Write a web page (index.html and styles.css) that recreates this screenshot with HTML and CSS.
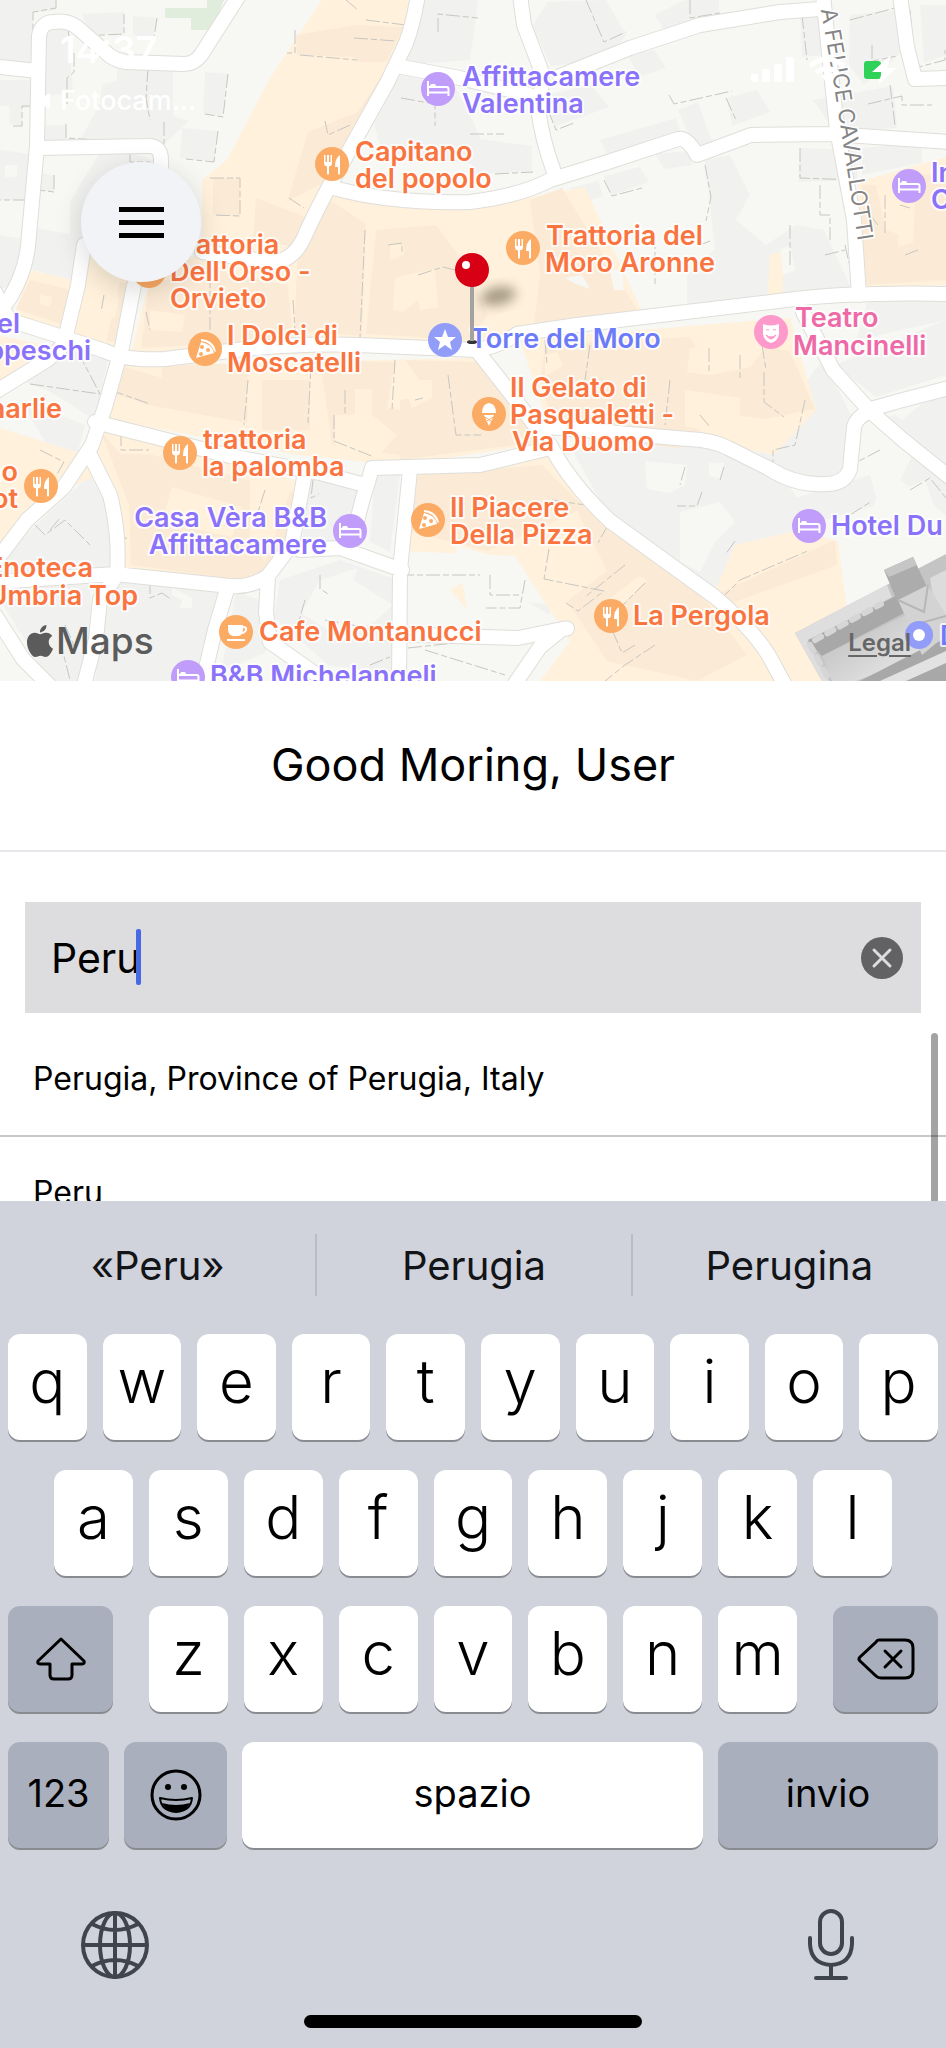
FILE: index.html
```html
<!DOCTYPE html>
<html lang="it">
<head>
<meta charset="utf-8">
<meta name="viewport" content="width=device-width, initial-scale=1">
<title>Home</title>
<link rel="stylesheet" href="styles.css">
</head>
<body>
<main class="screen">
  <section class="map" aria-label="Map">
    <svg class="map-canvas" viewBox="0 0 946 681" preserveAspectRatio="xMidYMid slice">
      <defs>
        <filter id="soft" x="-50%" y="-50%" width="200%" height="200%"><feGaussianBlur stdDeviation="6"/></filter>
        <linearGradient id="roof" x1="0" y1="0" x2="1" y2="1"><stop offset="0" stop-color="#b9b9b9"/><stop offset="1" stop-color="#ececec"/></linearGradient>
        <g id="food">
          <circle r="17" fill="#fcab64"/>
          <path d="M-8-9v8q0 3 3 3.500v7.500q1 1 2 0v-7.500q3-.5 3-3.500v-8h-1.500v7h-1.500v-7h-2v7h-1.500v-7zM8-9q-5 3-5 12h3v7q1 1 2 0z" fill="#fff"/>
        </g>
        <g id="bed">
          <circle r="17" fill="#c19dfb"/>
          <path d="M-10-8v15M-10 3.500H10.500M10.500 7V0q0-2-2-2H-9" fill="none" stroke="#fff" stroke-width="2"/>
          <rect x="-8" y="-5" width="6" height="4" rx="2" fill="#fff"/>
        </g>
        <g id="pizza">
          <circle r="17" fill="#fcab64"/>
          <path d="M-9 9L-4-7Q7-5 9 4zM-4-10Q9-9 11 3L9 2Q6-7-4-8z" fill="#fff"/>
          <g fill="#fcab64"><circle cx="-3" cy="-2" r="2"/><circle cx="3" cy="1" r="2"/><circle cx="-4" cy="5" r="2"/></g>
        </g>
        <g id="masks">
          <circle r="17" fill="#fd9acb"/>
          <path d="M-8-8Q0-5 8-8V2Q7 9 0 11Q-7 9-8 2z" fill="#fff"/>
          <path d="M-5-2q1.500-1 3 0M2-2q1.500-1 3 0M-5 3q5 4 10 0q-5 8-10 0" stroke="#fd9acb" fill="#fd9acb"/>
        </g>
        <g id="roads">
          <path d="M0 67l37 4M0 312l11-16q14-24 17-50l9-100 2-110q2-14 15-14 14-2 24 6l32 28q8 5 16 6l58 2q10 0 17-9L240-6"/>
          <path d="M37 148l110-2q14-1 14 14v90M84 245l-6 40-12 50M134 285l-12 62-17 60-13 38-28 42-37 33L-5 562M-5 292l14 28 44 14 52 17q20 10 60 8l80-10q60-6 113-4l119 5q20-3 40-16l60-9 210-25q60-8 165-6M-5 392l52-32 20-18"/>
          <path d="M418-5q-5 30-12 48l-18 38-58 104q-14 26-24 48-11 28-34 29l-70-10M330 187q60 17 140 15 50-6 80-22l58-18 70-23q9-2 19 16l54-20 80-1 120 8M520-5l4 30 17 45q2 20-3 38 4 32 16 64M397 66l63 12 70 17M560 76l70-28 70-23 80-13 40-3M823-5l14 135 17 90 5 75M900-5l7 52 8 32 35-1"/>
          <path d="M803 312l30 58 38 42 32 28 50 40M871 409l28-8 50-13M868 412q-12 6-14 15l-4 42q-5 15-24 15-30 2-58-16l-40-20q-15-8-40-9l-140-12M478 352l30 38 42 55q20 38 60 76l105 76q45 38 60 70l10 18M550 448l-70 17-108 3q-4 15-9 30l-13 50M410 470l-10 100-1 115M95 422l135 34 90 17 45 12M90 455l20 40q10 40 7 80l-17 24-4 40-12 46M-5 582l120-8 115 12q20 2 38-10l24-32 12-66M268 576l-2 36 4 30 60 42M300 550l40-2 62 22M228 586l-13 44-13 55M-5 615l28 44 26 26M388 634l130 4 44-9q10-1 0 0l-22 18-26 38"/>
        </g>
      </defs>

      <rect width="946" height="681" fill="#f7f7f3"/>
      <path d="M165 8h42V0h17l-12 30h-21V18h-26z" fill="#e1eddc"/>

      <g class="block">
        <path d="M0 0h56v10l-23 3v52L0 60zM43 30l25-2 5 65-31 3zM82 14l42-2v21l-34 2zM133 16l24 2-4 20-20-3zM117 66l56 3v47l16 5-25 23H78l22-40 2-20 15-3zM205 72l23 2-6 42-19-2zM182 128l36 3-4 30-34-3zM0 80h32v28H22v18L10 124l-1-18H0zM40 125h26v16l-26 1zM0 150l30 4-2 46H0zM38 173l16 2v17l-16-2zM100 152h30l28 10v80H70v-40z"/>
        <path d="M0 235l24 4-3 30-11 16-10 5zM36 228l44 8-8 45-42-12z"/>
        <path d="M418 0h60l-8 60-68 5zM400 75l55 12 12 20 25 60-110-15-8-28zM472 138l60 8v26l-60 2z"/>
        <path d="M548 2l58-2 20 35-20 25-55 6-19-40zM655 15l30-15h34v18l-55 12zM628 55l26-5 12 18-27 9zM546 95l45-10 18 22-55 20zM600 140l76-22 5 16-72 24zM678 110l20-8 15 42-17 6zM727 98l30-8 13 22-38 14zM604 176l36-9 9 15-38 14zM570 188l28-7 5 15-25 8zM655 154l35-3 2 14-28 4zM800 12l30 2 5 40-33 3zM850 15l46-5 8 40-40 35-15-20zM813 100l80-14 4 42-62 4zM920 5h26v50l-22 8z"/>
        <path d="M705 160l25-5 20 40-14 25 30 25 30-20 28 5 28 60-165 20v-35l28-26zM800 148l55 2 3 30-60 2zM862 148l60-5v20l-60 12z"/>
        <path d="M35 345l75 5-15 70-48-30-28-10zM20 400l65 25-8 30-30-10zM90 475l20 35 5 55-17 26-98-5v-28zM0 600l90-12 4 93H50zM110 580l110 12-15 89H95zM236 592l30 10v50l-45 20zM280 580l60-20 58 20v95l-70-10-54-48zM308 478l50 10-12 55-45 10zM375 472l25 2-10 78-20-10z"/>
        <path d="M572 450l95-6 58 4 50 25 18 18 20 40-20 20-12 40-28 20-80-50-70-55zM755 448l38-50 30-38 28 55-8 60-35 10-30-10zM835 365l111-45v55l-70 22zM880 420l66-25v70zM880 430l40 10-20 40 46 35v-30zM790 500l80-25 8 30-90 25zM870 295l76-5v30l-90 20zM480 595l70 10v25h-70z"/>
      </g>

      <g class="town">
        <path d="M322 0h90l-12 62-66 122-30 50-10 20-92-5V180l25-20 42-80z"/>
        <path d="M330 195l150 12 105-20 57 125-122 18-43 20-347 8 20-80 65-32 55 10z"/>
        <path d="M112 366l365-8 70 85-150 22-100-10-200-38zM100 430l202 52-12 60-38 40-130-14-4-60-25-60zM520 340l270-22 26 92-42 45-120-24-105-5zM412 475l138-20 55 65 110 80 70 81H540l30-40-55-85-110-5zM80 252l58 28-14 68-60-12zM30 270l42 10-10 62-50-20zM0 336l50 10-50 35zM0 428l80 25-80 100zM95 455l-20 30 20-8zM858 182l88-25v128l-84 3zM735 545l65-15 38 12 12 90 10 49h-72l-72-92z"/>
      </g>
      <g class="town-dark">
        <path d="M296 35l60-10 48 2-18 35-28 0-5-5-56-2zM308 132l50-20 18-28 14-20-65 118-38 20zM213 178h27v39l-27-2zM256 198l52 20-10 30-45-10zM330 200l36 24-4 112-68-6 4-80zM376 230l60-5 30 40 22 50-20 25-102-6zM530 200l32-12 77 125-105 12 6-50zM213 270l75 15 5 55-152 8 8-64zM120 282l18 4-10 58-22-3z"/>
        <path d="M162 366l85-3 1 60-100-18-42-14 12-26 44 13zM262 380h48v50h-48zM320 360l75 2-8 45 45 10-20 40-80-12zM405 360l70 2 65 80-140 18v-60l30-5zM101 432l20 22h28l150 40-12 55-36 32-120-16-2-60zM545 345l145-8 20 38 40-8 16-20 24 4 25 58-50 10-45-6-40 35-120-12-20-50zM412 475l130-10 60 60 100 70 45 60-50 26-90-20-40-60 40-30-30-60-90 40-80-20zM862 185l14 0 10 45 15 5 5-60 40 0v105l-82 5zM715 595l120-55 2 25-110 40zM30 280l42 10-8 35-48-16z"/>
      </g>
      <g class="town-light">
        <path d="M395 278l10-3 30-6 3 38-18 3-2-10-15 12-10-2zM390 245h14v10l-14 5zM150 310l35 5-3 17-32-2zM104 295l15 3-4 20-13-3zM250 382l12-2v40l-15 5zM335 415h20v-26h17v26l25 20-20 22-42-12zM402 380h30v18l-20 10zM122 432l26 8-2 15-25-4zM172 487l70 20-10 30-70-15zM250 480l40 12-25 70-15-22zM690 348h22l-3 27-22-3zM685 390l55 8v40l-55-12zM770 255l14-5-2 60-15-4zM900 200l15 2-2 40-15 5zM450 590l30-18 30 30-15 40zM617 610l30-30-8-4-36 28zM470 215l45-3 20 90-15 25-30-2zM545 355l12-3 6 14-18 10zM40 295l12 2-2 10-10-3z"/>
      </g>
      <g fill="#f7f7f3">
        <path d="M455 545l35 10 35 45 40 25-30 35-60-10zM645 461l42 4-2 20-15 8-23-4zM709 463h15l-4 15-11-2zM680 512l40-10 15 20-20 20-15 30-20-10zM780 250l10-5 5 25-12 5zM565 278l17-3 8 14-14-5zM610 270l12 0 2 20-10 0zM172 595l10 5-2 8 12 0v-10l-20-10zM320 580l38-12-5 12 40 25-20 18-40 10-32-20zM875 500l50-20 21 60-40 20-38-10zM680 205l10 0-8 18zM5 165h12v12H5zM875 400l20-5 25 10-18 15z"/>
      </g>
      <path class="outline" d="M56 0v8l-23 4v55M82 36l42-2V14M68 28l2 18 4 6v20l-7 6v26M148 68l-2 30 4 22M157 18l-3 20M66 124v14l78 5M164 122v22M228 74l-5 43-18-3M218 131l-4 31-28-3M33 106H22v20H10M54 175v17l-16-2M130 152v10h20M27 200H0M210 178l30 0v38l-27-1M300 55l57 5M366 20l40 5M354 38l42 3M346 0l12 10M295 30v23l-8 0M438 32v-18l40 4M401 98l34 6v22M350 125l-22 10-3-14M289 198l15 10M470 134h34M495 174l38-2M586 0l18 42 22-10M690 0v18l30-5M660 32l40-12M669 95l5 9 58-13M726 98l10 22M600 160l78-25M548 110l8 20 18-7M604 180l8 16 30-8M705 165l6 32-5 24M820 185v30h10v25M790 225v40M845 245l4 18M800 148v30l55 2M802 15l5 45M850 20l45-12M872 45v16l25-5M910 10l5 58 30-8V50M890 85l5 40M868 104l34-8v9h30M885 195v38M905 255l13-5M365 230l-5 108M418 275l25-8 20 5M388 245l14-2v12M104 295l-3 17M146 312l4 18M210 265v65M293 300l3 45M110 390l40 14M248 380l-4 45M311 365l-3 58M395 360l-3 50M345 390v25M415 400l8-2M448 375l8 60h25M334 415v26l40 16M121 432v18h28M78 352l22 42-70-10M45 395l-5 22M40 450l24 12-8 14M50 530l10-12M35 525l10 10 20-15 25 25M100 480l15 60 12-2M65 625l8 18v10M150 580v18l12-5 10 7M265 490l-8 25M313 480l-2 18 8-4M320 575v14l10 6M305 600l-8 28M325 620l65 12M400 575l80 0M490 575v20l30 0M525 580l-5 28h-34M549 549l-5 30 60 12-26 20-12-8M552 500l40 6M625 565l-40 32M645 583l-22 22M608 525l-10 18M635 645l-13 8-12-28M655 645l-30 20-20 16M685 467l-5 18M724 467l-4 13M702 492l-5 14-20 0M720 600l20-20 70-30M735 541l-10 14M764 372l0 30 20 15M805 400l-10 45-22 5v20M850 515l22-14M910 490l20-12 16 20M880 450l-38 20M545 340l2 25M590 345l-5 35M709 348v25M740 355v24M762 345l4 25M670 380l-5 45M700 415l10 12M655 235l0 50M700 245l10-4M825 255l20-5M900 205l10 3M870 215l8 10M60 640l10 40M370 665l20-8M408 648l75-8M425 650l80 25"/>

      <use class="road casing" href="#roads"/>
      <use class="road" href="#roads"/>

      <g>
        <path d="M795 633L946 554v127H822z" fill="#c4c4c4"/>
        <path d="M795 633l92-48 5 12-85 45 22 39h-7z" fill="#dedede"/>
        <path d="M808 640l92-46 10 16-88 46z" fill="#a8a8a8"/>
        <path d="M822 656l90-44 14 42-70 27h-24z" fill="url(#roof)"/>
        <path d="M860 681l66-34 20-8v42z" fill="#a8a8a8"/>
        <path d="M880 681l66-30v12l-40 18z" fill="#e2e2e2"/>
        <path d="M930 578l16-8v60l-8-4z" fill="#dcdcdc"/>
        <path d="M884 570l29-13 14 30-30 14z" fill="#acacac"/>
        <path d="M884 570l29-13 4 8-28 12z" fill="#c6c6c6"/>
        <path d="M898 600l30-15 18 30v20l-24 20-12-28z" fill="#d3d3d3"/>
        <path d="M898 600l26 12 4-27M910 626l36-10" fill="none" stroke="#b7b7b7" stroke-width="2"/>
        <path d="M815 640l66-36M810 645l20 36" fill="none" stroke="#d6d6d6" stroke-width="6" stroke-dasharray="7 7" stroke-linecap="round"/>
      </g>

      <path id="street" d="M817-12L834 85l24 156" fill="none"/>
      <text class="street end"><textPath href="#street" startOffset="100%">A FELICE CAVALLOTTI</textPath></text>

      <circle cx="149" cy="271" r="17" fill="#fcab64"/>
      <use href="#food" x="332" y="164"/><use href="#food" x="523" y="248"/><use href="#food" x="180" y="453"/><use href="#food" x="41" y="486"/><use href="#food" x="611" y="616"/>
      <use href="#bed" x="438" y="89"/><use href="#bed" x="909" y="186"/><use href="#bed" x="350" y="531"/><use href="#bed" x="188" y="677"/><use href="#bed" x="809" y="526"/>
      <use href="#pizza" x="205" y="349"/><use href="#pizza" x="428" y="520"/><use href="#masks" x="771" y="332"/>
      <g transform="translate(445 340)"><circle r="17" fill="#929cf9"/><path d="M0-11l3 8h8l-6 5 2 8-7-5-7 5 2-8-6-5h8z" fill="#fff"/></g>
      <g transform="translate(489 414)"><circle r="17" fill="#fcab64"/><path d="M-7-1Q-7-10 0-11Q7-10 7-1z" fill="#fff"/><path d="M-5 1H5L0 12z" fill="#fff"/><path d="M-4 3l6 4M4 3l-6 4" stroke="#fcab64"/></g>
      <g transform="translate(236 632)"><circle r="17" fill="#fcab64"/><path d="M-8-7H7V-3Q7 4 2 4H-3Q-8 3-8-3z" fill="#fff"/><path d="M7-5q4 0 3 3-1 3-5 3M-9 8H9" fill="none" stroke="#fff" stroke-width="2"/></g>
      <g transform="translate(919 635)"><circle r="14" fill="#929cf9"/><circle r="6" fill="#fff"/></g>

      <g class="label food">
        <text x="355" y="161">Capitano<tspan x="355" y="188">del popolo</tspan></text>
        <text x="169" y="254">Trattoria<tspan x="170" y="281">Dell'Orso -</tspan><tspan x="170" y="308">Orvieto</tspan></text>
        <text x="546" y="245">Trattoria del<tspan x="545" y="272">Moro Aronne</tspan></text>
        <text x="227" y="345">I Dolci di<tspan x="227" y="372">Moscatelli</tspan></text>
        <text x="510" y="397">Il Gelato di<tspan x="510" y="424">Pasqualetti -</tspan><tspan x="512" y="451">Via Duomo</tspan></text>
        <text x="203" y="449">trattoria<tspan x="202" y="476">la palomba</tspan></text>
        <text x="450" y="517">Il Piacere<tspan x="450" y="544">Della Pizza</tspan></text>
        <text x="633" y="625">La Pergola</text>
        <text x="259" y="641">Cafe Montanucci</text>
        <text class="end" x="62" y="418">harlie</text>
        <text class="end" x="18" y="481">no<tspan x="18" y="508">ot</tspan></text>
        <text class="end" x="93" y="577">Enoteca<tspan x="138" y="605">Umbria Top</tspan></text>
      </g>
      <g class="label hotel">
        <text x="462" y="86">Affittacamere<tspan x="462" y="113">Valentina</tspan></text>
        <text x="931" y="182">In<tspan x="931" y="209">C</tspan></text>
        <text class="end" x="20" y="333">el<tspan x="91" y="360">ppeschi</tspan></text>
        <text class="end" x="327" y="527">Casa Vèra B&amp;B<tspan x="327" y="554">Affittacamere</tspan></text>
        <text x="210" y="685">B&amp;B Michelangeli</text>
        <text x="831" y="535">Hotel Du</text>
      </g>
      <g class="label sight"><text x="470" y="348">Torre del Moro</text><text x="940" y="645">D</text></g>
      <g class="label stage"><text x="795" y="327">Teatro<tspan x="793" y="355">Mancinelli</tspan></text></g>

      <ellipse cx="498" cy="296" rx="18" ry="9" fill="#6b5f4c" opacity=".6" filter="url(#soft)" transform="rotate(-12 498 296)"/>
      <ellipse cx="472" cy="342" rx="5" ry="2" fill="#333"/>
      <path d="M472 284v57" stroke="#a2a2a2" stroke-width="4"/>
      <circle cx="472" cy="270" r="17" fill="#d70015"/><circle cx="466" cy="265" r="4" fill="#fff"/>
    </svg>

    <div class="status">
      <div class="status-left">
        <time class="clock">14:37</time>
        <a class="back" href="#"><svg width="14" height="18" viewBox="0 0 14 18"><path d="M14 1v16L0 9z" fill="#fff"/></svg>Fotocam...</a>
      </div>
      <svg class="status-icons" width="160" height="30" viewBox="0 0 160 30">
        <g fill="#fff"><rect x="1" y="18" width="7" height="8" rx="2"/><rect x="12" y="13" width="8" height="13" rx="2"/><rect x="24" y="8" width="8" height="18" rx="2"/><rect x="36" y="1" width="8" height="25" rx="2"/></g>
        <g fill="none" stroke="#fff" stroke-width="5"><path d="M60 10q17-14 34 0M66 17q11-9 22 0"/></g><path d="M71 20q6-4 12 0l-6 7z" fill="#fff"/>
        <rect x="114" y="5" width="17" height="18" rx="3" fill="#30d158"/>
        <path d="M141-1L122 16h10l-4 13 18-17h-9z" fill="#fff"/>
      </svg>
    </div>
    <button class="menu" type="button" aria-label="Menu"><span></span><span></span><span></span></button>
    <div class="brand"><svg width="32" height="32" viewBox="0 0 24 24"><path fill="currentColor" d="M12.152 6.896c-.948 0-2.415-1.078-3.960-1.040-2.040.027-3.910 1.183-4.961 3.014-2.117 3.675-.546 9.103 1.519 12.090 1.013 1.454 2.208 3.090 3.792 3.039 1.520-.065 2.090-.987 3.935-.987 1.831 0 2.350.987 3.960.948 1.637-.026 2.676-1.480 3.676-2.948 1.156-1.688 1.636-3.325 1.662-3.415-.039-.013-3.182-1.221-3.220-4.857-.026-3.040 2.480-4.494 2.597-4.559-1.429-2.090-3.623-2.324-4.390-2.376-2-.156-3.675 1.090-4.610 1.090zM15.530 3.830c.843-1.012 1.400-2.427 1.245-3.830-1.207.052-2.662.805-3.532 1.818-.780.896-1.454 2.338-1.273 3.714 1.338.104 2.715-.688 3.559-1.701"/></svg>Maps</div>
    <a class="legal" href="#">Legal</a>
  </section>

  <h1 class="greeting">Good Moring, User</h1>

  <div class="search">
    <input class="search-input" type="text" value="Peru" aria-label="Search a place">
    <span class="caret"></span>
    <button class="clear" type="button" aria-label="Clear text"><svg width="42" height="42" viewBox="0 0 42 42"><circle cx="21" cy="21" r="21" fill="#626264"/><path d="M13 13l16 16M29 13L13 29" stroke="#dddddf" stroke-width="3" stroke-linecap="round"/></svg></button>
  </div>

  <div class="results">
    <ul class="result-list">
      <li><a class="result" href="#">Perugia, Province of Perugia, Italy</a></li>
      <li><a class="result" href="#">Peru</a></li>
    </ul>
    <span class="scrollbar"></span>
  </div>

  <section class="keyboard" aria-label="Keyboard">
    <div class="suggestions">
      <button type="button">«Peru»</button><button type="button">Perugia</button><button type="button">Perugina</button>
    </div>
    <div class="keys">
      <div class="row">
        <button class="key">q</button><button class="key">w</button><button class="key">e</button><button class="key">r</button><button class="key">t</button><button class="key">y</button><button class="key">u</button><button class="key">i</button><button class="key">o</button><button class="key">p</button>
      </div>
      <div class="row row-inset">
        <button class="key">a</button><button class="key">s</button><button class="key">d</button><button class="key">f</button><button class="key">g</button><button class="key">h</button><button class="key">j</button><button class="key">k</button><button class="key">l</button>
      </div>
      <div class="row row-shift">
        <button class="key dark" aria-label="Shift"><svg width="54" height="46" viewBox="0 0 54 46"><path d="M27 3L4 25q-1 3 2 3h10v11q0 4 4 4h14q4 0 4-4V28h10q3 0 2-3z" fill="none" stroke="#000" stroke-width="3" stroke-linejoin="round"/></svg></button>
        <div class="row">
          <button class="key">z</button><button class="key">x</button><button class="key">c</button><button class="key">v</button><button class="key">b</button><button class="key">n</button><button class="key">m</button>
        </div>
        <button class="key dark" aria-label="Delete"><svg width="58" height="44" viewBox="0 0 58 44"><path d="M22 3h26q8 0 8 8v22q0 8-8 8H24q-3 0-5-2L3 24q-2-2 0-4L19 5q1-2 3-2z" fill="none" stroke="#000" stroke-width="3"/><path d="M28 14l16 16M44 14L28 30" stroke="#000" stroke-width="3" stroke-linecap="round"/></svg></button>
      </div>
      <div class="row-bottom">
        <button class="key dark word">123</button>
        <button class="key dark" aria-label="Emoji"><svg width="52" height="52" viewBox="0 0 52 52"><circle cx="26" cy="26" r="24" fill="none" stroke="#000" stroke-width="3"/><circle cx="18" cy="18" r="3"/><circle cx="34" cy="18" r="3"/><path d="M10 29q16 4 32 0-1 13-16 14Q11 42 10 29z" fill="none" stroke="#000" stroke-width="2" stroke-linejoin="round"/><path d="M12 34q14 4 28 0-4 9-14 9t-14-9z"/></svg></button>
        <button class="key word">spazio</button>
        <button class="key dark word">invio</button>
      </div>
    </div>
    <div class="dock">
      <button type="button" aria-label="Next keyboard"><svg width="70" height="70" viewBox="0 0 70 70" fill="none" stroke="#40444d" stroke-width="4"><circle cx="35" cy="35" r="32"/><ellipse cx="35" cy="35" rx="15" ry="32"/><path d="M35 3v64M3 35h64M12 14q23 12 46 0M12 56q23-12 46 0"/></svg></button>
      <button type="button" aria-label="Dictation"><svg width="50" height="74" viewBox="0 0 50 74" fill="none" stroke="#40444d" stroke-width="4" stroke-linecap="round"><rect x="14" y="3" width="22" height="43" rx="11"/><path d="M4 30v6q1 20 21 21 20-1 21-21v-6M25 58v12M10 70h30"/></svg></button>
    </div>
    <div class="home-bar"></div>
  </section>
</main>
</body>
</html>
```
FILE: styles.css
```css
* { box-sizing: border-box; }
body { margin: 0; background: #fff; font-family: Inter, "Liberation Sans", sans-serif; color: #000; }
button { border: 0; padding: 0; margin: 0; background: none; font: inherit; color: inherit; }
a { color: inherit; text-decoration: none; }
svg { display: block; }

.screen { display: flex; flex-direction: column; height: 100vh; overflow: hidden; }

.map { position: relative; flex: none; overflow: hidden; }
.map-canvas { width: 100%; height: auto; }
.block { fill: #f1f1f0; }
.town { fill: #fff1db; }
.town-dark { fill: #fbebd6; }
.town-light { fill: #fff1db; }
.outline { fill: none; stroke: #c8c6c1; stroke-width: 1; stroke-dasharray: 14 3 6 3; }
.road { fill: none; stroke: #fff; stroke-width: 14; stroke-linejoin: round; stroke-linecap: round; }
.casing { stroke: #dfdeda; stroke-width: 16; }
.street { font-size: 22px; font-weight: 400; fill: #858585; stroke: #fff; stroke-width: 3; paint-order: stroke; }
.label { font-size: 27px; font-weight: 600; stroke: #fff; stroke-opacity: .8; stroke-width: 4; stroke-linejoin: round; paint-order: stroke; }
.food { fill: #fa7440; }
.hotel { fill: #8a72fb; }
.sight { fill: #6b7bfa; }
.stage { fill: #ee6aa6; }
.end { text-anchor: end; }

.status { position: absolute; inset: 0 0 auto; display: flex; justify-content: space-between; padding: 28px 36px 0; color: #fff; }
.status-left { display: flex; flex-direction: column; gap: 8px; }
.clock { padding-left: 24px; font-size: 37px; line-height: 44px; font-weight: 600; }
.back { display: flex; align-items: center; gap: 10px; font-size: 27px; line-height: 42px; font-weight: 500; }
.status-icons { margin-top: 28px; }

.menu { position: absolute; left: 81px; top: 162px; width: 120px; height: 120px; border-radius: 50%; background: #f1f3f6; box-shadow: 0 8px 28px rgba(0, 0, 0, .15); display: flex; flex-direction: column; align-items: center; justify-content: center; gap: 8px; }
.menu span { width: 45px; height: 5px; background: #000; }
.brand { position: absolute; left: 24px; bottom: 18px; display: flex; align-items: center; color: #5b5b5b; font-size: 37px; line-height: 44px; font-weight: 500; }
.legal { position: absolute; right: 35px; bottom: 24px; color: #666; font-size: 24px; line-height: 28px; font-weight: 600; text-decoration: underline; text-underline-offset: 4px; }

.greeting { flex: none; margin: 0; padding: 56px 0 57px; border-bottom: 2px solid #e5e7eb; text-align: center; font-size: 45px; line-height: 56px; font-weight: 400; }

.search { position: relative; flex: none; margin: 50px 25px 10px; }
.search-input { display: block; width: 100%; height: 111px; border: 0; border-radius: 0; outline: 0; padding: 0 80px 0 26px; background: #dddddf; font: inherit; font-size: 41px; }
.caret { position: absolute; left: 111px; top: 27px; width: 5px; height: 56px; border-radius: 2px; background: #456ae4; }
.clear { position: absolute; right: 18px; top: 35px; }

.results { position: relative; flex: 1; min-height: 0; overflow: hidden; }
.result-list { margin: 0; padding: 0; list-style: none; }
.result { display: block; padding: 36px 33px; border-bottom: 2px solid #c8c8c8; font-size: 32px; line-height: 40px; }
.scrollbar { position: absolute; right: 8px; top: 10px; bottom: 0; width: 7px; border-radius: 4px 4px 0 0; background: rgba(0, 0, 0, .36); }

.keyboard { flex: none; background: #d0d3dc; padding: 33px 8px 20px; }
.suggestions { display: grid; grid-template-columns: 1fr 1fr 1fr; margin: 0 -8px 38px; }
.suggestions button { height: 62px; font-size: 40px; color: #121417; }
.suggestions button + button { border-left: 2px solid #b9bcc5; }
.keys { display: grid; gap: 30px; }
.row { display: flex; gap: 16px; }
.row-inset { padding: 0 46px; }
.row-shift { gap: 36px; }
.row-shift > .row { flex: 648 1 0; }
.row-shift > .dark { flex: 105 1 0; }
.row-bottom { display: grid; grid-template-columns: 101fr 103fr 461fr 220fr; gap: 15px; }
.key { flex: 1 1 0; min-width: 0; height: 106px; padding-bottom: 12px; border-radius: 12px; background: #fff; box-shadow: 0 2px 0 #898b90; font-size: 60px; font-weight: 300; line-height: 80px; display: flex; align-items: center; justify-content: center; }
.dark { background: #a9afbc; padding-bottom: 0; }
.word { font-size: 38px; font-weight: 400; padding-bottom: 4px; }
.dock { display: flex; justify-content: space-between; align-items: center; padding: 60px 82px 0 72px; }
.home-bar { width: 338px; height: 13px; margin: 33px auto 0; border-radius: 7px; background: #000; }
```
